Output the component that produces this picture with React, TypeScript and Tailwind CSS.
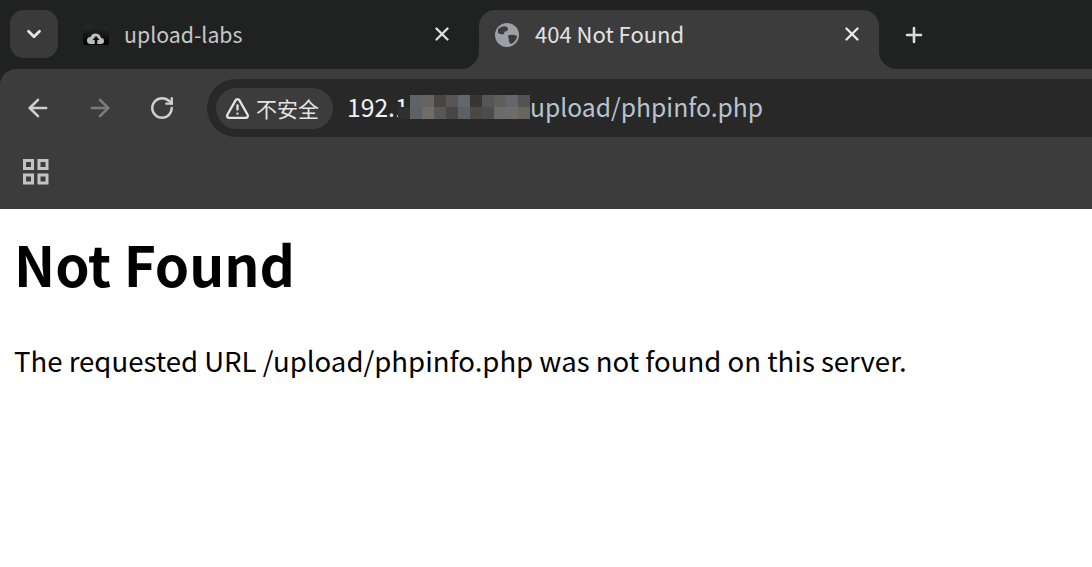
import React from 'react'
import { ArrowLeft, ArrowRight, ChevronDown, Plus, RotateCw, TriangleAlert, X } from 'lucide-react'

const uiFont = "font-['Noto_Sans_CJK_SC','Noto_Sans',sans-serif]"

// mosaic over the redacted part of the address
const mosaic = [
  'transparent', '#5f6367', '#646464', '#484645', '#565656', '#63666a', '#373536', '#565656', '#5e5e5e', '#63666b', '#525252',
  '#2f2f30', '#5c6368', '#6e6d69', '#575757', '#464646', '#5b6166', '#4b4845', '#4c4b50', '#6b6b6b', '#6c6c6c', '#66665f',
]

const Flare = ({ side }: { side: 'left' | 'right' }) => (
  <svg
    width="18"
    height="18"
    viewBox="0 0 18 18"
    className={`absolute bottom-0 ${side === 'left' ? '-left-[18px]' : '-right-[18px]'}`}
  >
    <path d={side === 'left' ? 'M18 0V18H0A18 18 0 0 0 18 0Z' : 'M0 0V18H18A18 18 0 0 1 0 0Z'} fill="#3c3c3c" />
  </svg>
)

const Favicon = () => (
  <svg width="28" height="22" viewBox="0 0 28 22" className="shrink-0">
    <defs>
      <linearGradient id="folder" x1="0" y1="0" x2="0" y2="1">
        <stop offset="0" stopColor="#2a2a2a" />
        <stop offset="0.5" stopColor="#161616" />
        <stop offset="1" stopColor="#000000" />
      </linearGradient>
    </defs>
    <path d="M1 3q0-2 2-2h7l2 2h13q2 0 2 2v14q0 2-2 2H3q-2 0-2-2Z" fill="url(#folder)" />
    <path d="M8.500 20a3.500 3.500 0 0 1 0-7 5.500 5.500 0 0 1 10.500 1 3 3 0 0 1 0 6Z" fill="#bdbdbd" />
    <path d="M14 12l-3.500 4h2.200v4h2.600v-4h2.200Z" fill="#0a0a0a" />
  </svg>
)

const Globe = () => (
  <svg width="24" height="24" viewBox="0 0 24 24" className="shrink-0">
    <circle cx="12" cy="12" r="12" fill="#9aa0a6" />
    <path d="M3 6q5-4 9-2 2 2 0 4-3 0-3 3-3 1-6-1ZM14 12q5-1 8 1-1 6-6 8-3-2-2-5-2-2 0-4Z" fill="#3c3c3c" />
  </svg>
)

const AppsIcon = () => (
  <svg width="26" height="26" viewBox="0 0 26 26" fill="none" stroke="#c4c4c4" strokeWidth="3">
    <rect x="1.500" y="1.500" width="8" height="8" />
    <rect x="16" y="1.500" width="8" height="8" />
    <rect x="1.500" y="16" width="8" height="8" />
    <rect x="16" y="16" width="8" height="8" />
  </svg>
)

export default function App() {
  return (
    <div className={`w-[1092px] h-[567px] overflow-hidden bg-white ${uiFont}`}>
      {/* tab strip */}
      <div className="h-[69px] bg-[#202221] flex items-start pl-[10px] pt-[10px]">
        <button className="w-[48px] h-[48px] rounded-[14px] bg-[#3a3a3a] flex items-center justify-center text-[#e6e6e6]">
          <ChevronDown size={22} strokeWidth={3} />
        </button>

        <div className="w-[421px] h-[49px] flex items-center pl-[24px] pr-[26px] text-[#c7c7c7]">
          <Favicon />
          <span className="ml-[14px] mb-[1px] text-[21.300px] leading-none flex-1">upload-labs</span>
          <X size={22} strokeWidth={2.600} className="mb-[1px] text-[#dedede]" />
        </div>

        <div className="relative w-[400px] h-[59px] rounded-t-[16px] bg-[#3c3c3c] flex items-center pl-[16px] pr-[16px] pb-[10px] text-[#e3e3e3]">
          <Flare side="left" />
          <Flare side="right" />
          <Globe />
          <span className="ml-[16px] mb-[3px] text-[22px] leading-none flex-1">404 Not Found</span>
          <X size={22} strokeWidth={2.600} className="mb-[1px] text-[#ececec]" />
        </div>

        <div className="ml-[23px] h-[49px] flex items-center text-[#dcdcdc]">
          <Plus size={24} strokeWidth={2.600} />
        </div>
      </div>

      {/* toolbar and bookmarks sit on a rounded panel */}
      <div className="bg-[#202221]">
        <div className="h-[140px] bg-[#3c3c3c] rounded-tl-[16px]">
          <div className="h-[70px] flex items-start">
            <div className="w-[207px] h-[58px] mt-[10px] flex items-center pl-[24px]">
              <ArrowLeft size={28} strokeWidth={2.200} className="text-[#d0d0d0]" />
              <ArrowRight size={28} strokeWidth={2.200} className="ml-[34px] text-[#7c7c7c]" />
              <RotateCw size={26} strokeWidth={2.200} className="ml-[35px] text-[#d0d0d0]" />
            </div>
            <div className="flex-1 h-[58px] mt-[10px] bg-[#282828] rounded-l-[29px] flex items-center pl-[9px]">
              <div className="h-[41px] w-[117px] rounded-full bg-[#3c3c3c] flex items-center pl-[9px] text-[#e4e4e4]">
                <TriangleAlert size={25} strokeWidth={2.200} />
                <span className="ml-[6px] text-[21px] leading-none">不安全</span>
              </div>
              <div className="ml-[14px] flex items-center text-[24.700px] leading-none">
                <span className="w-[51px] mb-[3px] whitespace-nowrap text-[#f1f1f1]">192.1</span>
                <div className="grid grid-cols-[repeat(11,12px)] grid-rows-[12px_12px] mb-[2px]">
                  {mosaic.map((c, i) => (
                    <div key={i} style={{ backgroundColor: c }} />
                  ))}
                </div>
                <span className="mb-[3px] text-[#b9c3ce]">upload/phpinfo.php</span>
              </div>
            </div>
          </div>
          <div className="h-[70px] pl-[23px] pt-[20px]">
            <AppsIcon />
          </div>
        </div>
      </div>

      {/* page */}
      <div className="pl-[14px] text-black">
        <h1 className="mt-[18px] text-[55px] leading-[72px] font-bold">Not Found</h1>
        <p className="mt-[41px] text-[27.570px] leading-[40px]">
          The requested URL /upload/phpinfo.php was not found on this server.
        </p>
      </div>
    </div>
  )
}
